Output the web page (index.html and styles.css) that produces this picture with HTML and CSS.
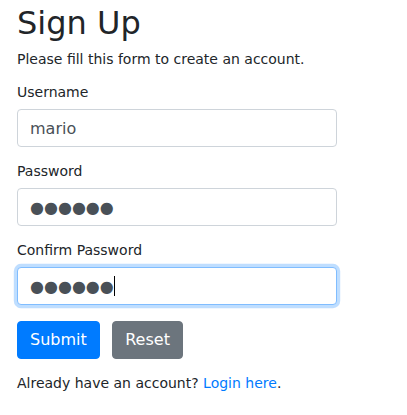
FILE: index.html
```html
<!DOCTYPE html>
<html lang="en">
<head>
<meta charset="utf-8">
<title>Sign Up</title>
<link rel="stylesheet" href="styles.css">
</head>
<body>
<div class="wrapper">
  <h2 class="title">Sign Up</h2>
  <p class="lead-text">Please fill this form to create an account.</p>
  <form class="form">
    <div class="form-group">
      <label class="label">Username</label>
      <input type="text" class="form-control" value="mario">
    </div>
    <div class="form-group">
      <label class="label">Password</label>
      <input type="text" class="form-control dots" value="●●●●●●">
    </div>
    <div class="form-group">
      <label class="label">Confirm Password</label>
      <div class="field">
        <input type="text" class="form-control dots is-focused" value="●●●●●●">
        <span class="caret"></span>
      </div>
    </div>
    <div class="form-group">
      <button type="button" class="btn btn-primary">Submit</button>
      <button type="button" class="btn btn-secondary ml-2">Reset</button>
    </div>
    <p class="footer-text">Already have an account? <a href="#" class="link">Login here</a>.</p>
  </form>
</div>
</body>
</html>
```
FILE: styles.css
```css
* { box-sizing: border-box; }
html, body { margin: 0; padding: 0; background: #fff; }
body {
  font-family: "DejaVu Sans", sans-serif;
  font-size: 14px;
  color: #212529;
}
.wrapper {
  width: 354px;
  padding: 4px 17px 0 17px;
}
.title {
  margin: 0 0 9px 0;
  font-size: 32px;
  font-weight: 500;
  line-height: 1.2;
}
.lead-text { margin: 0 0 17px 0; }
.form { margin: 0; }
.form-group { margin-bottom: 16px; }
.label {
  display: block;
  line-height: 17px;
  margin-bottom: 8px;
}
.field { position: relative; }
.form-control {
  display: block;
  width: 100%;
  height: 38px;
  padding: 6px 12px;
  font-family: "DejaVu Sans", sans-serif;
  font-size: 16px;
  line-height: 1.5;
  color: #495057;
  background: #fff;
  border: 1px solid #ced4da;
  border-radius: 4px;
  outline: none;
  margin: 0;
}
.dots { letter-spacing: 0; }
.is-focused {
  border-color: #80bdff;
  box-shadow: 0 0 0 3.2px rgba(0, 123, 255, 0.25);
}
.caret {
  position: absolute;
  left: 97px;
  top: 9px;
  width: 1px;
  height: 20px;
  background: #000;
}
.btn {
  display: inline-block;
  font-family: "DejaVu Sans", sans-serif;
  font-size: 16px;
  line-height: 1.5;
  padding: 6px 12px;
  border: 1px solid transparent;
  border-radius: 4px;
  color: #fff;
  cursor: pointer;
  margin: 0;
  vertical-align: middle;
}
.btn-primary { background: #007bff; border-color: #007bff; }
.btn-secondary { background: #6c757d; border-color: #6c757d; }
.ml-2 { margin-left: 8px; }
.footer-text { margin: 0 0 16px 0; }
.link { color: #007bff; text-decoration: none; }
```
